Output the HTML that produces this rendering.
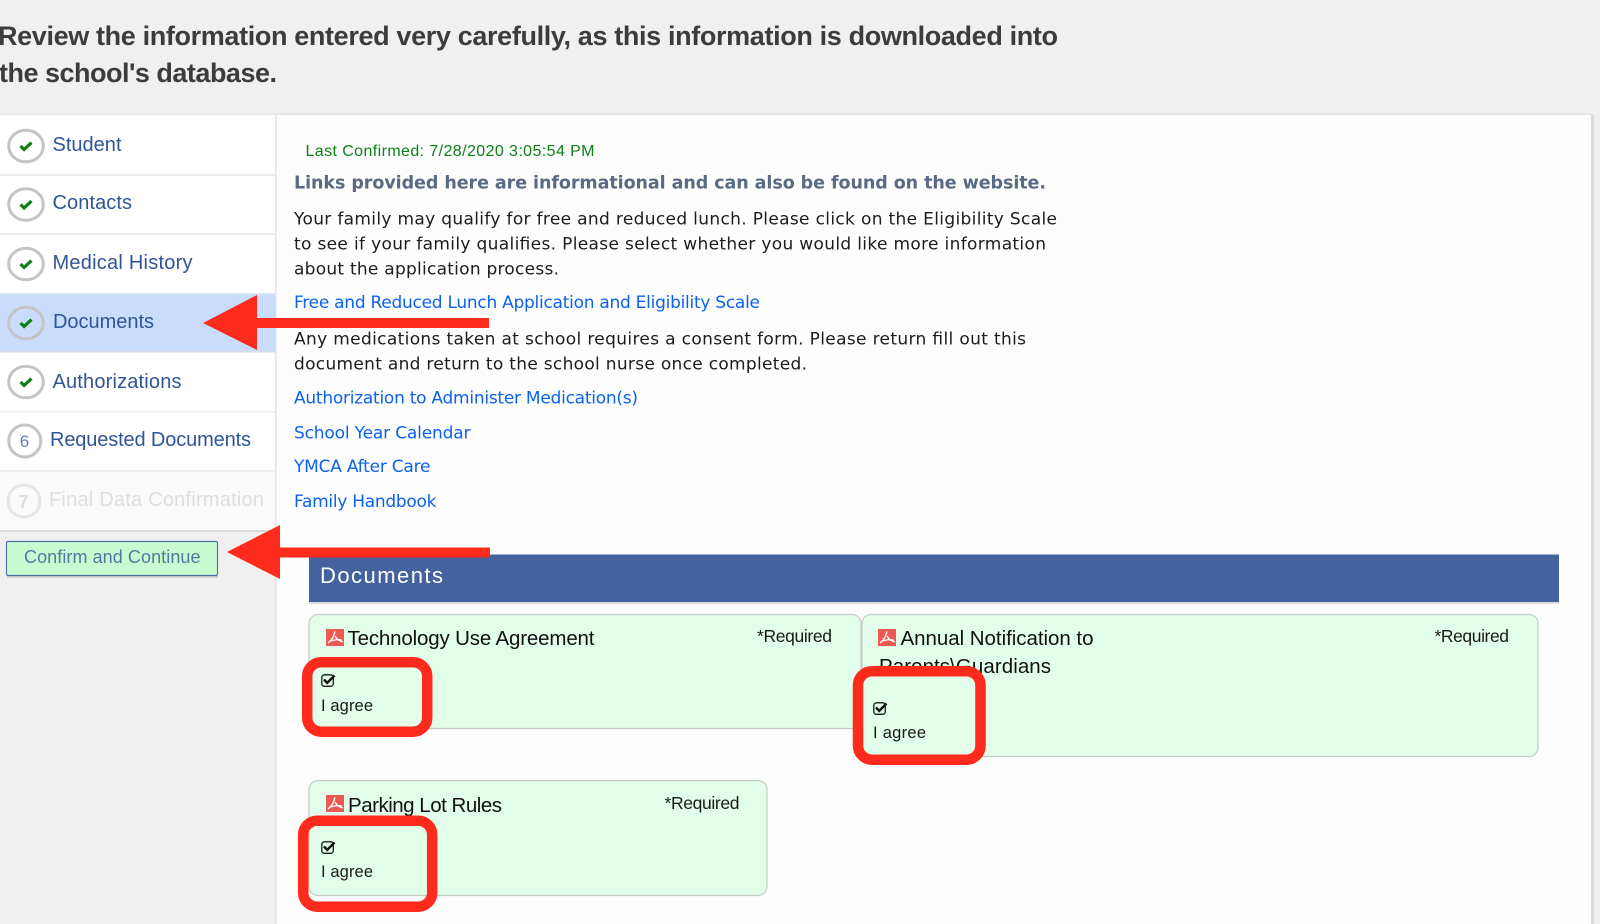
<!DOCTYPE html>
<html lang="en">
<head>
<meta charset="utf-8">
<title>Documents</title>
<style>
html,body{margin:0;padding:0;width:1600px;height:924px;overflow:hidden;background:#f0f0f0}
svg{display:block;filter:blur(.35px)}
.h{font:bold 27px "Liberation Sans",sans-serif;fill:#3c3c3e}
.n{font:20px "Liberation Sans",sans-serif;fill:#2f5597}
.b{font:17px "DejaVu Sans",sans-serif;fill:#1c1c1c}
.l{font:17px "DejaVu Sans",sans-serif;fill:#0b62ee}
.t{font:20.5px "Liberation Sans",sans-serif;fill:#111}
.r{font:17.5px "Liberation Sans",sans-serif;fill:#1a1a1a}
.a{font:16.5px "Liberation Sans",sans-serif;fill:#1a1a1a}
</style>
</head>
<body>
<svg width="1600" height="924" viewBox="0 0 1600 924" xmlns="http://www.w3.org/2000/svg">
<defs>
<g id="pdf">
<rect x="0" y="0" width="18" height="17" fill="#ea5a52"/>
<path d="M9 2.5C8 6 7 10 2 14M9 7c2 3.5 4 5 8 6M3 12.5c4-1.5 8-2.5 13-1.5" fill="none" stroke="#fff" stroke-width="1.3"/>
</g>
<g id="cb">
<rect x="0.8" y="0.8" width="11.5" height="11.5" rx="2.5" fill="none" stroke="#1a1a1a" stroke-width="1.3"/>
<path d="M3 5.5l3.2 3.4L13.5 1.5" fill="none" stroke="#111" stroke-width="2.4"/>
</g>
<g id="ok">
<ellipse cx="0" cy="0" rx="17.3" ry="15.8" fill="none" stroke="#c4c4c4" stroke-width="3"/>
<path d="M-5.5 0l3.6 3.4L5.5 -3.4" fill="none" stroke="#0c7f16" stroke-width="3.2"/>
</g>
</defs>

<rect width="1600" height="924" fill="#f0f0f0"/>
<text class="h" x="-2" y="45" textLength="1060" lengthAdjust="spacing">Review the information entered very carefully, as this information is downloaded into</text>
<text class="h" x="-1" y="82" textLength="278" lengthAdjust="spacing">the school's database.</text>

<!-- main panel -->
<rect x="0" y="113.5" width="1592" height="2" fill="#e3e3e3"/>
<rect x="1591" y="115" width="3" height="809" fill="#dcdcdc"/>
<rect x="276" y="115" width="1315" height="809" fill="#fdfdfd"/>
<rect x="275" y="115" width="1.5" height="809" fill="#e2e2e2"/>

<!-- nav -->
<rect x="0" y="115" width="275" height="415" fill="#fff"/>
<rect x="0" y="294" width="275" height="58" fill="#c9dcfb"/>
<rect x="0" y="471" width="275" height="59" fill="#fafafa"/>
<g fill="#ececec">
<rect x="0" y="174" width="275" height="2"/>
<rect x="0" y="233" width="275" height="2"/>
<rect x="0" y="293" width="275" height="1.5" fill="#dfe5ee"/>
<rect x="0" y="351" width="275" height="1.5" fill="#d5dce8"/>
<rect x="0" y="411" width="275" height="1.5"/>
<rect x="0" y="470" width="275" height="1.5"/>
<rect x="0" y="530" width="275" height="2" fill="#dcdcdc"/>
</g>
<use href="#ok" x="26" y="146"/>
<use href="#ok" x="26" y="204.5"/>
<use href="#ok" x="26" y="264"/>
<use href="#ok" x="26" y="323"/>
<use href="#ok" x="26" y="382"/>
<circle cx="24.8" cy="441" r="16" fill="none" stroke="#c4c4c4" stroke-width="3"/>
<text x="24.5" y="447" text-anchor="middle" style="font:17px 'Liberation Sans',sans-serif;fill:#5f82b0">6</text>
<circle cx="24" cy="501" r="16" fill="none" stroke="#e6e6e6" stroke-width="3"/>
<text x="23.5" y="508" text-anchor="middle" style="font:bold 18px 'Liberation Sans',sans-serif;fill:#dedede">7</text>

<text class="n" x="52.5" y="151" textLength="69" lengthAdjust="spacing">Student</text>
<text class="n" x="52.5" y="209" textLength="79.5" lengthAdjust="spacing">Contacts</text>
<text class="n" x="52.5" y="269" textLength="140" lengthAdjust="spacing">Medical History</text>
<text class="n" x="53" y="328" textLength="101" lengthAdjust="spacing">Documents</text>
<text class="n" x="52.5" y="388" textLength="129" lengthAdjust="spacing">Authorizations</text>
<text class="n" x="50" y="446" textLength="201" lengthAdjust="spacing">Requested Documents</text>
<text class="n" x="49" y="506" textLength="215" lengthAdjust="spacing" style="fill:#dedede">Final Data Confirmation</text>

<!-- button -->
<rect x="7" y="576" width="211" height="2" fill="#cfcfcf"/>
<rect x="6.5" y="541.5" width="211" height="34" rx="1.5" fill="#c8fcd0" stroke="#4f73a6" stroke-width="1.2"/>
<text x="24" y="563" textLength="176.5" lengthAdjust="spacing" style="font:18px 'Liberation Sans',sans-serif;fill:#5577a3">Confirm and Continue</text>

<!-- content text -->
<text x="305.5" y="156" textLength="289" lengthAdjust="spacing" style="font:16px 'Liberation Sans',sans-serif;fill:#0c7f16">Last Confirmed: 7/28/2020 3:05:54 PM</text>
<text x="294" y="188.5" textLength="752" lengthAdjust="spacing" style="font:bold 17.5px 'DejaVu Sans',sans-serif;fill:#5a6a85">Links provided here are informational and can also be found on the website.</text>
<text class="b" x="294" y="224.5" textLength="763" lengthAdjust="spacing">Your family may qualify for free and reduced lunch. Please click on the Eligibility Scale</text>
<text class="b" x="294" y="249.5" textLength="752" lengthAdjust="spacing">to see if your family qualifies. Please select whether you would like more information</text>
<text class="b" x="294" y="274.5" textLength="265" lengthAdjust="spacing">about the application process.</text>
<text class="l" x="294" y="308" textLength="466" lengthAdjust="spacing">Free and Reduced Lunch Application and Eligibility Scale</text>
<text class="b" x="294" y="344.5" textLength="732" lengthAdjust="spacing">Any medications taken at school requires a consent form. Please return fill out this</text>
<text class="b" x="294" y="369.5" textLength="513" lengthAdjust="spacing">document and return to the school nurse once completed.</text>
<text class="l" x="294" y="403.5" textLength="344" lengthAdjust="spacing">Authorization to Administer Medication(s)</text>
<text class="l" x="294" y="438.5" textLength="176.5" lengthAdjust="spacing">School Year Calendar</text>
<text class="l" x="294" y="472" textLength="136.5" lengthAdjust="spacing">YMCA After Care</text>
<text class="l" x="294" y="507" textLength="142.5" lengthAdjust="spacing">Family Handbook</text>

<!-- section bar -->
<rect x="309" y="555" width="1250" height="49" fill="#dcdcdc"/>
<rect x="309" y="554.5" width="1250" height="47.5" fill="#44629e"/>
<text x="320" y="583" textLength="123" lengthAdjust="spacing" style="font:22px 'Liberation Sans',sans-serif;fill:#fff">Documents</text>

<!-- cards -->
<g fill="#e2fdea" stroke="#c3cbc6" stroke-width="1.2">
<rect x="309" y="614.5" width="552" height="114" rx="9"/>
<rect x="862" y="614.5" width="676" height="142" rx="9"/>
<rect x="309" y="780.5" width="458" height="115" rx="9"/>
</g>
<use href="#pdf" x="326" y="629"/>
<text class="t" x="347.5" y="645" textLength="247" lengthAdjust="spacing">Technology Use Agreement</text>
<text class="r" x="757" y="642" textLength="75" lengthAdjust="spacing">*Required</text>
<use href="#cb" x="321" y="674"/>
<text class="a" x="321" y="711" textLength="52" lengthAdjust="spacing">I agree</text>

<use href="#pdf" x="878" y="629"/>
<text class="t" x="900.5" y="645" textLength="193" lengthAdjust="spacing">Annual Notification to</text>
<text class="t" x="879" y="673" textLength="172" lengthAdjust="spacing">Parents\Guardians</text>
<text class="r" x="1434.5" y="642" textLength="74.5" lengthAdjust="spacing">*Required</text>
<use href="#cb" x="873" y="702"/>
<text class="a" x="873" y="738" textLength="53" lengthAdjust="spacing">I agree</text>

<use href="#pdf" x="326" y="795"/>
<text class="t" x="348" y="812" textLength="154" lengthAdjust="spacing">Parking Lot Rules</text>
<text class="r" x="664.5" y="809" textLength="75" lengthAdjust="spacing">*Required</text>
<use href="#cb" x="321" y="841"/>
<text class="a" x="321" y="877" textLength="52" lengthAdjust="spacing">I agree</text>

<!-- annotations -->
<g fill="none" stroke="#fe2a1c" stroke-width="10.5">
<rect x="307.2" y="662.2" width="120" height="69.5" rx="14"/>
<rect x="858" y="671.2" width="122.5" height="88.5" rx="14"/>
<rect x="303.2" y="820.7" width="129" height="86" rx="14"/>
</g>
<path d="M203 323L257 295V318H489V328H257V350Z" fill="#fe2a1c"/>
<path d="M227 552L280 525V547.5H490V557.5H280V579Z" fill="#fe2a1c"/>
</svg>
</body>
</html>
